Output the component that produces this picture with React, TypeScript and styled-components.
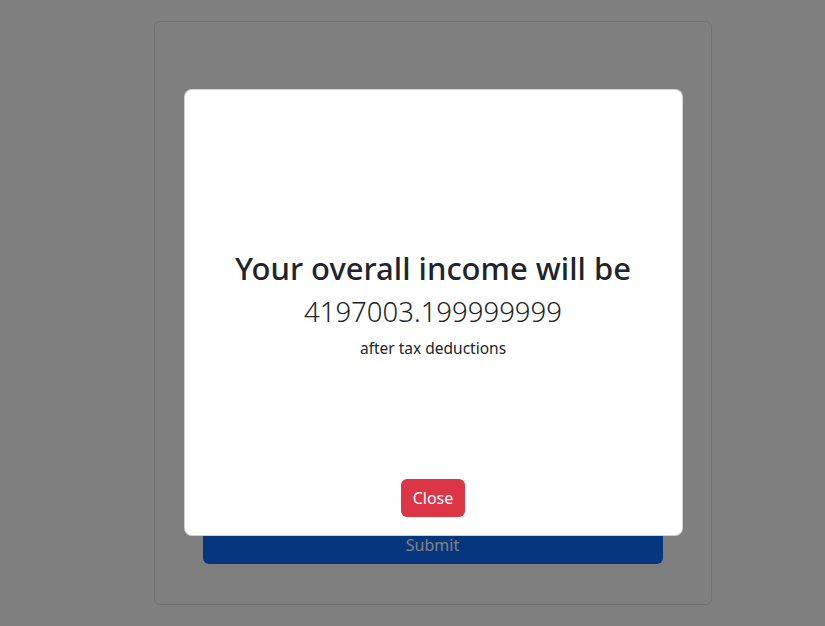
import styled, { createGlobalStyle } from "styled-components";

const GlobalStyle = createGlobalStyle`
  html, body {
    margin: 0;
    padding: 0;
    background: #ffffff;
    font-family: "Noto Sans", "Open Sans", sans-serif;
    color: #212529;
  }
  * { box-sizing: border-box; }
`

const Page = styled.div`
  position: relative;
  width: 825px;
  height: 626px;
  overflow: hidden;
  display: flex;
  justify-content: center;
  padding: 21px 0 0 40px;
`

const FormCard = styled.form`
  width: 558px;
  height: 584px;
  border: 1px solid #dee2e6;
  border-radius: 6px;
  display: flex;
  flex-direction: column;
  justify-content: flex-end;
  padding: 0 48px 40px 48px;
`

const SubmitButton = styled.button`
  width: 100%;
  height: 38px;
  border: none;
  border-radius: 6px;
  background: #0d6efd;
  color: #ffffff;
  font-family: inherit;
  font-size: 16px;
`

const Backdrop = styled.div`
  position: absolute;
  inset: 0;
  background: rgba(0, 0, 0, 0.5);
  display: flex;
  justify-content: center;
  padding: 89px 0 0 41px;
`

const Dialog = styled.div`
  width: 499px;
  height: 447px;
  background: #ffffff;
  border: 1px solid rgba(0, 0, 0, 0.175);
  border-radius: 8px;
  display: flex;
  flex-direction: column;
`

const DialogBody = styled.div`
  flex: 1;
  display: flex;
  flex-direction: column;
  align-items: center;
  justify-content: center;
  padding-top: 41px;
`

const Title = styled.h1`
  margin: 0;
  font-size: 31px;
  font-weight: 500;
  line-height: 1.2;
`

const Amount = styled.p`
  margin: 6px 0 0 0;
  font-size: 27.5px;
  font-weight: 300;
  line-height: 1.4;
`

const Note = styled.p`
  margin: 6px 0 0 0;
  font-size: 15.5px;
  line-height: 1.5;
`

const DialogFooter = styled.div`
  display: flex;
  justify-content: center;
  padding: 0 0 18px 0;
`

const CloseButton = styled.button`
  height: 38px;
  padding: 0 12px;
  border: none;
  border-radius: 6px;
  background: #dc3545;
  color: #ffffff;
  font-family: inherit;
  font-size: 16px;
`

export default function App() {
  return (
    <>
      <GlobalStyle />
      <Page>
        <FormCard onSubmit={(e) => e.preventDefault()}>
          <SubmitButton type="submit">Submit</SubmitButton>
        </FormCard>
        <Backdrop>
          <Dialog>
            <DialogBody>
              <Title>Your overall income will be</Title>
              <Amount>4197003.199999999</Amount>
              <Note>after tax deductions</Note>
            </DialogBody>
            <DialogFooter>
              <CloseButton>Close</CloseButton>
            </DialogFooter>
          </Dialog>
        </Backdrop>
      </Page>
    </>
  )
}
